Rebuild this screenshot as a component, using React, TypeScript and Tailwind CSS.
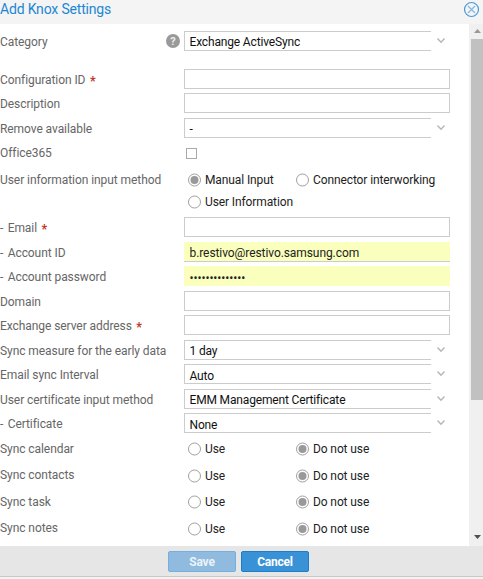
import React from "react";

function Label({ text, required, sub, shift = "pt-px" }: { text: string; required?: boolean; sub?: boolean; shift?: string }) {
  return (
    <div className={`w-[184px] shrink-0 whitespace-pre tracking-[-0.07px] text-[#666] ${shift}`}>
      {sub && <span className="mr-[1.5px]">- </span>}
      {text}
      {required && <span className="ml-[4.5px] inline-block translate-y-px text-[12px] font-black leading-none text-[#c0392b]">*</span>}
    </div>
  );
}

function TextField() {
  return <div className="h-5 w-[266px] border border-[#ccc] bg-white" />;
}

function Select({ value, lowered }: { value: string; lowered?: boolean }) {
  return (
    <div className="flex h-5 w-[266px]">
      <div
        className={`h-5 w-[247px] border border-r-0 border-[#ccc] pl-[4.5px] tracking-[-0.16px] text-[#111] ${lowered ? "leading-[22px]" : "leading-5"}`}
      >
        {value}
      </div>
      <svg className="ml-[6px] mt-[6px]" width="9" height="7" viewBox="0 0 9 7" fill="none" stroke="#b5b5b5" strokeWidth="1.4">
        <path d="M0.5 1.5 L4 5.2 L7.5 1.5" />
      </svg>
    </div>
  );
}

function Radio({ label, checked, width }: { label: string; checked?: boolean; width: string }) {
  return (
    <div className={`flex items-center ${width}`}>
      <svg width="13" height="14" viewBox="0 0 13 14" fill="none">
        <circle cx="6.5" cy="7" r="6" stroke="#a0a0a0" />
        {checked && <circle cx="6.5" cy="7" r="4" fill="#999" />}
      </svg>
      <span className="ml-1 whitespace-nowrap tracking-[-0.11px] text-[#222]">{label}</span>
    </div>
  );
}

function Row({ height, children }: { height: string; children: React.ReactNode }) {
  return <div className={`flex items-start ${height}`}>{children}</div>;
}

function UseRow({ label, height, shift = "" }: { label: string; height: string; shift?: string }) {
  return (
    <Row height={height}>
      <Label text={label} shift={shift} />
      <div className="flex pl-1">
        <Radio label="Use" width="w-[108px]" />
        <Radio label="Do not use" checked width="w-[108px]" />
      </div>
    </Row>
  );
}

export default function App() {
  return (
    <div className="flex h-[579px] w-[483px] flex-col overflow-hidden bg-white font-[Roboto,sans-serif] text-[12px] leading-[20px]">
      <header className="flex h-6 shrink-0 items-start justify-between bg-[#f4f4f4]">
        <h1 className="text-[14px] leading-[18px] tracking-[-0.18px] text-[#1c87d4]">Add Knox Settings</h1>
        <svg className="mr-[3px] mt-[1px]" width="17" height="17" viewBox="0 0 17 17" fill="none" stroke="#4a9ad6">
          <circle cx="8.5" cy="8.5" r="7" strokeWidth="1.2" />
          <path d="M5 5 L12 12 M12 5 L5 12" stroke="#80b7e3" strokeWidth="1.2" />
        </svg>
      </header>
      <div className="flex h-[522px] shrink-0">
        <main className="w-[469px] pt-[7px]">
          <Row height="h-[38px]">
            <div className="flex w-[184px] justify-between text-[#666]">
              <span className="pt-px tracking-[-0.07px]">Category</span>
              <span className="mr-1 mt-[3px] flex h-[14px] w-[14px] items-center justify-center rounded-full bg-[#999] text-[11px] font-bold leading-none text-[#eee]">?</span>
            </div>
            <Select value="Exchange ActiveSync" />
          </Row>
          <Row height="h-6"><Label text="Configuration ID" required /><TextField /></Row>
          <Row height="h-[25px]"><Label text="Description" /><TextField /></Row>
          <Row height="h-[25px]"><Label text="Remove available" /><Select value="-" /></Row>
          <Row height="h-[27px]">
            <Label text="Office365" shift="" />
            <div className="ml-[2px] mt-[5px] h-[11px] w-[11px] border border-[#aaa]" />
          </Row>
          <Row height="h-[47px]">
            <Label text="User information input method" shift="" />
            <div className="pl-1">
              <div className="flex">
                <Radio label="Manual Input" checked width="w-[108px]" />
                <Radio label="Connector interworking" width="w-[150px]" />
              </div>
              <div className="mt-[2px]"><Radio label="User Information" width="w-[150px]" /></div>
            </div>
          </Row>
          <Row height="h-[25px]"><Label sub text="Email" required /><TextField /></Row>
          <Row height="h-6">
            <Label sub text="Account ID" />
            <div className="h-5 w-[266px] border-b border-[#ccc] bg-[#faffbd] pl-[5.5px] leading-[22px] tracking-[-0.08px] text-[#222]">b.restivo@restivo.samsung.com</div>
          </Row>
          <Row height="h-[25px]">
            <Label sub text="Account password" />
            <div className="flex h-5 w-[266px] items-center bg-[#faffbd] pl-[5.5px] pt-[3px] tracking-[-0.07px] text-[#222]">••••••••••••••</div>
          </Row>
          <Row height="h-6"><Label text="Domain" /><TextField /></Row>
          <Row height="h-[25px]"><Label text="Exchange server address" required /><TextField /></Row>
          <Row height="h-6"><Label text="Sync measure for the early data" /><Select value="1 day" /></Row>
          <Row height="h-[25px]"><Label text="Email sync Interval" /><Select value="Auto" lowered /></Row>
          <Row height="h-6"><Label text="User certificate input method" /><Select value="EMM Management Certificate" /></Row>
          <Row height="h-[26px]"><Label sub text="Certificate" /><Select value="None" lowered /></Row>
          <UseRow label="Sync calendar" height="h-[27px]" />
          <UseRow label="Sync contacts" height="h-[26px]" shift="-mt-px" />
          <UseRow label="Sync task" height="h-[27px]" />
          <UseRow label="Sync notes" height="h-[26px]" shift="-mt-px" />
        </main>
        <div className="flex w-[14px] flex-col items-center bg-[#f0f0f0]">
          <svg className="mt-[5px] h-[10px] w-[14px] shrink-0" viewBox="0 0 14 10"><path d="M5 4 L8.5 0 L12 4Z" fill="#999" /></svg>
          <div className="h-[361px] w-3 self-end bg-[#c1c1c1]" />
          <svg className="mb-[7px] mt-auto" width="14" height="4"><path d="M5 0 L8.5 4 L12 0Z" fill="#505050" /></svg>
        </div>
      </div>
      <footer className="flex h-[30px] shrink-0 items-start gap-[5px] bg-[#e6e6e6] pl-[168px] pt-[5px] text-center font-bold tracking-[-0.2px] text-white">
        <div className="h-[21px] w-[68px] rounded-[2px] border border-[#73afe0] bg-[#90bbdf] leading-[21px] text-[#eaf3fa]">Save</div>
        <div className="h-[21px] w-[68px] rounded-[2px] border border-[#1c7dcb] bg-[#3a92d6] leading-[21px]">Cancel</div>
      </footer>
      <div className="h-[3px] border-t border-[#c8c8c8] bg-[#f4f4f4]" />
    </div>
  );
}
